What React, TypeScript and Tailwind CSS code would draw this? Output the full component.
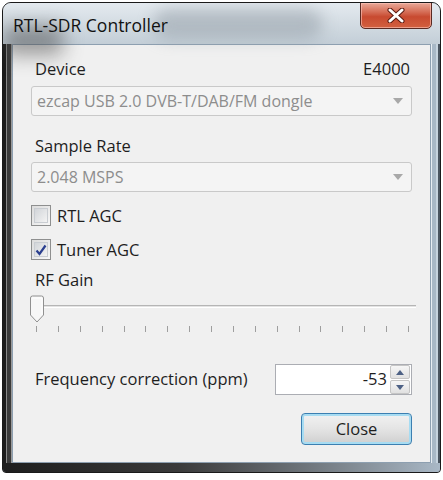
import React from "react";

const font = { fontFamily: '"Open Sans", "Noto Sans", sans-serif' };

function ComboArrow() {
  return (
    <svg width="10" height="6" viewBox="0 0 10 6" className="shrink-0">
      <path d="M0 0 L10 0 L5 6 Z" fill="#a8a8a8" />
    </svg>
  );
}

function Combo({ text }: { text: string }) {
  return (
    <div className="flex h-[30px] items-center justify-between rounded-[3px] border border-[#c9c9c9] bg-[#f4f4f4] pl-[5px] pr-[8px] text-[16px] text-[#8d8d8d]">
      <span>{text}</span>
      <ComboArrow />
    </div>
  );
}

function Checkbox({ checked, label }: { checked: boolean; label: string }) {
  return (
    <div className="flex h-[21px] items-center gap-[6px]">
      <div className="flex h-[21px] w-[20px] items-center justify-center border border-[#8e8f8f] bg-linear-to-br from-[#dcdcdc] to-[#f7f7f7] p-[2px]">
        <div className="flex h-full w-full items-center justify-center border border-[#c9cdd2] bg-linear-to-br from-[#d2d5d9] to-[#f3f3f3]">
          {checked && (
            <svg width="12" height="12" viewBox="0 0 12 12">
              <path d="M1.5 6.5 L4.5 10 L10.5 1.5" fill="none" stroke="#2a3f8f" strokeWidth="2.2" />
            </svg>
          )}
        </div>
      </div>
      <span className="text-[16.5px] leading-[20px] text-[#1e1e1e]">{label}</span>
    </div>
  );
}

export default function App() {
  const ticks = Array.from({ length: 18 });
  return (
    <div className="h-[480px] w-[443px] bg-white" style={font}>
      <div className="ml-[2px] pt-[2px]">
        <div className="flex h-[471px] w-[439px] flex-col overflow-hidden rounded-t-[9px] rounded-b-[4px] border border-[#1a1a1a] bg-[#7d8790]">
          {/* Title bar */}
          <div className="relative h-[41px] shrink-0 bg-linear-to-b from-[#e4eaef] to-[#c3ced7]">
            <div className="absolute left-[150px] top-[6px] h-[30px] w-[170px] rounded-[20px] bg-[#8f99a2] opacity-50 blur-[8px]" />
            <div className="absolute left-[0px] top-[22px] h-[30px] w-[60px] bg-[#444] opacity-50 blur-[10px]" />
            <div className="absolute left-[10px] top-[9px] text-[17.5px] text-[#111]">RTL-SDR Controller</div>
            <div className="absolute left-[357px] top-[-1px] flex h-[27px] w-[72px] items-center justify-center rounded-b-[5px] border border-[#5a2a22] bg-linear-to-b from-[#e8a898] via-[#c84a30] via-55% to-[#d2603f] shadow-[inset_0_0_0_1px_rgba(255,200,190,0.6)]">
              <svg width="18" height="15" viewBox="0 0 18 15">
                <path d="M3 2 L15 13 M15 2 L3 13" stroke="#5a1a10" strokeWidth="5" strokeLinecap="round" />
                <path d="M3 2 L15 13 M15 2 L3 13" stroke="#ffffff" strokeWidth="3" strokeLinecap="round" />
              </svg>
            </div>
          </div>
          <div className="flex min-h-0 flex-1 flex-row">
            {/* Left frame */}
            <div className="flex w-[9px] shrink-0 flex-row bg-[#2a2a2a]">
              <div className="w-[3px] bg-[#1c1c1c]" />
              <div className="w-[1px] bg-[#8a8a8a]" />
              <div className="w-[4px] bg-[#3a3a3a]" />
              <div className="w-[1px] bg-[#9a9a9a]" />
            </div>
            {/* Client area */}
            <div className="min-w-0 flex-1 border border-[#8d9fb0] bg-[#f0f0f0] px-[18px] text-[#1e1e1e]">
              <div className="mt-[14px] flex items-center justify-between pl-[4px] pr-[2px] text-[16.5px] leading-[20px]">
                <span>Device</span>
                <span>E4000</span>
              </div>
              <div className="mt-[7px]">
                <Combo text="ezcap USB 2.0 DVB-T/DAB/FM dongle" />
              </div>
              <div className="mt-[20px] pl-[4px] text-[16.5px] leading-[20px]">Sample Rate</div>
              <div className="mt-[6px]">
                <Combo text="2.048 MSPS" />
              </div>
              <div className="mt-[13px]">
                <Checkbox checked={false} label="RTL AGC" />
              </div>
              <div className="mt-[13px]">
                <Checkbox checked={true} label="Tuner AGC" />
              </div>
              <div className="mt-[10px] pl-[4px] text-[16.5px] leading-[20px]">RF Gain</div>
              {/* Slider */}
              <div className="relative mt-[5px] h-[38px]">
                <div className="absolute left-[13px] right-[-4px] top-[10px] h-[3px] border-t border-b border-t-[#b5b5b5] border-b-white bg-[#e3e3e3]" />
                <svg className="absolute left-[-2px] top-0" width="16" height="28" viewBox="0 0 16 28">
                  <path d="M1.5 3 Q1.5 1 3.5 1 L12.5 1 Q14.5 1 14.5 3 L14.5 20 L8 27 L1.5 20 Z" fill="#f7f7f7" stroke="#909090" strokeWidth="1" />
                  <path d="M3 3 L13 3 L13 19.5" fill="none" stroke="#ffffff" strokeWidth="1" />
                </svg>
                <div className="absolute left-[5px] right-[3px] top-[31px] flex justify-between">
                  {ticks.map((_, i) => (
                    <div key={i} className="h-[6px] w-[1px] bg-[#9e9e9e]" />
                  ))}
                </div>
              </div>
              {/* Frequency correction */}
              <div className="mt-[31px] flex items-center justify-between">
                <span className="pl-[4px] text-[16.5px]">Frequency correction (ppm)</span>
                <div className="flex h-[31px] w-[137px] items-center border border-[#abadb3] bg-white">
                  <span className="flex-1 pr-[3px] text-right text-[16.5px]">-53</span>
                  <div className="mr-[1px] flex h-[29px] w-[20px] flex-col gap-[1px]">
                    <div className="flex flex-1 items-center justify-center rounded-[2px] border border-[#c5c5c5] bg-linear-to-b from-[#f6f6f6] to-[#e1e1e1]">
                      <svg width="8" height="5" viewBox="0 0 8 5"><path d="M0 5 L4 0 L8 5 Z" fill="#4d6185" /></svg>
                    </div>
                    <div className="flex flex-1 items-center justify-center rounded-[2px] border border-[#c5c5c5] bg-linear-to-b from-[#f6f6f6] to-[#e1e1e1]">
                      <svg width="8" height="5" viewBox="0 0 8 5"><path d="M0 0 L8 0 L4 5 Z" fill="#4d6185" /></svg>
                    </div>
                  </div>
                </div>
              </div>
              <div className="mt-[18px] flex justify-end">
                <div className="flex h-[32px] w-[111px] items-center justify-center rounded-[4px] border border-[#3c7fb1] bg-linear-to-b from-[#f2f2f2] via-[#e4e4e4] to-[#cfcfcf] text-[16.5px] shadow-[inset_0_0_0_2px_#a7dcf2]">
                  Close
                </div>
              </div>
            </div>
            {/* Right frame */}
            <div className="flex w-[9px] shrink-0 flex-row bg-[#b4c3d0]">
              <div className="w-[1px] bg-[#e8eef3]" />
              <div className="w-[4px] bg-[#a8b8c6]" />
              <div className="w-[2px] bg-[#c6d3de]" />
              <div className="w-[2px] bg-[#4a5560]" />
            </div>
          </div>
          {/* Bottom frame */}
          <div className="h-[9px] shrink-0 bg-linear-to-r from-[#1e1e1e] via-[#3a3a3a] via-40% to-[#a9b8c6]" />
        </div>
      </div>
    </div>
  );
}
